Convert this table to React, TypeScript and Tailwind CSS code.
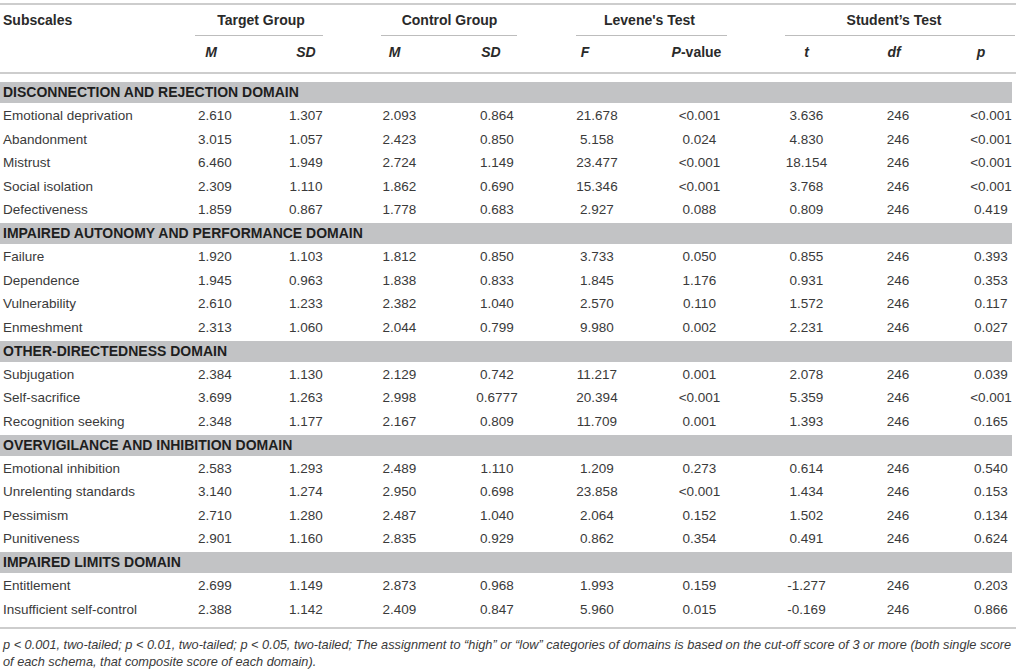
const COLS =
  "grid grid-cols-[170px_90px_92px_95px_100px_100px_105px_100px_92px_72px]";

type Row = { kind: "domain"; label: string } | { kind: "data"; label: string; v: string[] };

const ROWS: Row[] = [
  { kind: "domain", label: "DISCONNECTION AND REJECTION DOMAIN" },
  { kind: "data", label: "Emotional deprivation", v: ["2.610", "1.307", "2.093", "0.864", "21.678", "<0.001", "3.636", "246", "<0.001"] },
  { kind: "data", label: "Abandonment", v: ["3.015", "1.057", "2.423", "0.850", "5.158", "0.024", "4.830", "246", "<0.001"] },
  { kind: "data", label: "Mistrust", v: ["6.460", "1.949", "2.724", "1.149", "23.477", "<0.001", "18.154", "246", "<0.001"] },
  { kind: "data", label: "Social isolation", v: ["2.309", "1.110", "1.862", "0.690", "15.346", "<0.001", "3.768", "246", "<0.001"] },
  { kind: "data", label: "Defectiveness", v: ["1.859", "0.867", "1.778", "0.683", "2.927", "0.088", "0.809", "246", "0.419"] },
  { kind: "domain", label: "IMPAIRED AUTONOMY AND PERFORMANCE DOMAIN" },
  { kind: "data", label: "Failure", v: ["1.920", "1.103", "1.812", "0.850", "3.733", "0.050", "0.855", "246", "0.393"] },
  { kind: "data", label: "Dependence", v: ["1.945", "0.963", "1.838", "0.833", "1.845", "1.176", "0.931", "246", "0.353"] },
  { kind: "data", label: "Vulnerability", v: ["2.610", "1.233", "2.382", "1.040", "2.570", "0.110", "1.572", "246", "0.117"] },
  { kind: "data", label: "Enmeshment", v: ["2.313", "1.060", "2.044", "0.799", "9.980", "0.002", "2.231", "246", "0.027"] },
  { kind: "domain", label: "OTHER-DIRECTEDNESS DOMAIN" },
  { kind: "data", label: "Subjugation", v: ["2.384", "1.130", "2.129", "0.742", "11.217", "0.001", "2.078", "246", "0.039"] },
  { kind: "data", label: "Self-sacrifice", v: ["3.699", "1.263", "2.998", "0.6777", "20.394", "<0.001", "5.359", "246", "<0.001"] },
  { kind: "data", label: "Recognition seeking", v: ["2.348", "1.177", "2.167", "0.809", "11.709", "0.001", "1.393", "246", "0.165"] },
  { kind: "domain", label: "OVERVIGILANCE AND INHIBITION DOMAIN" },
  { kind: "data", label: "Emotional inhibition", v: ["2.583", "1.293", "2.489", "1.110", "1.209", "0.273", "0.614", "246", "0.540"] },
  { kind: "data", label: "Unrelenting standards", v: ["3.140", "1.274", "2.950", "0.698", "23.858", "<0.001", "1.434", "246", "0.153"] },
  { kind: "data", label: "Pessimism", v: ["2.710", "1.280", "2.487", "1.040", "2.064", "0.152", "1.502", "246", "0.134"] },
  { kind: "data", label: "Punitiveness", v: ["2.901", "1.160", "2.835", "0.929", "0.862", "0.354", "0.491", "246", "0.624"] },
  { kind: "domain", label: "IMPAIRED LIMITS DOMAIN" },
  { kind: "data", label: "Entitlement", v: ["2.699", "1.149", "2.873", "0.968", "1.993", "0.159", "-1.277", "246", "0.203"] },
  { kind: "data", label: "Insufficient self-control", v: ["2.388", "1.142", "2.409", "0.847", "5.960", "0.015", "-0.169", "246", "0.866"] },
];

// per-column horizontal nudges so centers match the printed table
const CELL_PAD = ["", "", "", "", "", "", "", "pl-[9px]", "", "pl-[22px]"];

function DataRow({ label, v }: { label: string; v: string[] }) {
  return (
    <div className={`${COLS} h-[23.5px] items-center text-[13.5px] text-[#3a3a3a]`}>
      <div className="pl-[3px] whitespace-nowrap">{label}</div>
      {v.map((x, i) => (
        <div key={i} className={`text-center whitespace-nowrap ${CELL_PAD[i + 1]}`}>
          {x}
        </div>
      ))}
    </div>
  );
}

function DomainRow({ label }: { label: string }) {
  return (
    <div className="h-[23.5px] py-[1.25px] pr-[4px]">
      <div className="h-full bg-[#c2c3c5] flex items-center pl-[3px] text-[14px] font-bold text-[#1e1e1e] whitespace-nowrap">
        {label}
      </div>
    </div>
  );
}

export default function App() {
  return (
    <div className="w-[1016px] h-[670px] bg-white overflow-hidden font-['Liberation_Sans',Arial,sans-serif]">
      <div className="pt-[3px]">
        <div className="h-[2px] bg-[#cdcdcd]" />

        {/* group header row */}
        <div className={`${COLS} h-[31px] text-[14px] font-bold text-[#2a2a2a]`}>
          <div className="pl-[3px] flex items-center">Subscales</div>
          <div className="col-span-2 flex flex-col">
            <div className="flex-1 flex items-center justify-center">Target Group</div>
            <div className="ml-[25px] mr-[29px] h-px bg-[#bdbdbd]" />
          </div>
          <div className="col-span-2 flex flex-col">
            <div className="flex-1 flex items-center justify-center">Control Group</div>
            <div className="ml-[29px] mr-[30px] h-px bg-[#bdbdbd]" />
          </div>
          <div className="col-span-2 flex flex-col">
            <div className="flex-1 flex items-center justify-center">Levene's Test</div>
            <div className="ml-[29px] mr-[25px] h-px bg-[#bdbdbd]" />
          </div>
          <div className="col-span-3 flex flex-col">
            <div className="flex-1 flex items-center justify-center pl-[20px]">Student’s Test</div>
            <div className="ml-[33px] mr-[1px] h-px bg-[#bdbdbd]" />
          </div>
        </div>

        {/* sub header row */}
        <div className={`${COLS} h-[33px] items-center text-[14px] font-bold italic text-[#2a2a2a]`}>
          <div />
          <div className="text-center pr-[8px]">M</div>
          <div className="text-center">SD</div>
          <div className="text-center pr-[10px]">M</div>
          <div className="text-center pr-[12px]">SD</div>
          <div className="text-center pr-[24px]">F</div>
          <div className="text-center pr-[6px]">
            P<span className="not-italic">-value</span>
          </div>
          <div className="text-center pl-[9px]">t</div>
          <div className="text-center pr-[8px]">df</div>
          <div className="text-center pr-[4px] pl-[6px]">p</div>
        </div>
        <div className="mt-[3px] h-[2px] bg-[#cdcdcd]" />

        <div className="mt-[7px]">
          {ROWS.map((r, i) =>
            r.kind === "domain" ? (
              <DomainRow key={i} label={r.label} />
            ) : (
              <DataRow key={i} label={r.label} v={r.v} />
            )
          )}
        </div>

        <div className="mt-[5px] h-[2px] bg-[#cdcdcd]" />

        <p className="mt-[7px] pl-[3px] pr-[2px] text-[12.75px] leading-[17px] italic text-[#3a3a3a]">
          p &lt; 0.001, two-tailed; p &lt; 0.01, two-tailed; p &lt; 0.05, two-tailed; The assignment to “high” or
          “low” categories of domains is based on the cut-off score of 3 or more (both single score of each
          schema, that composite score of each domain).
        </p>
      </div>
    </div>
  );
}
